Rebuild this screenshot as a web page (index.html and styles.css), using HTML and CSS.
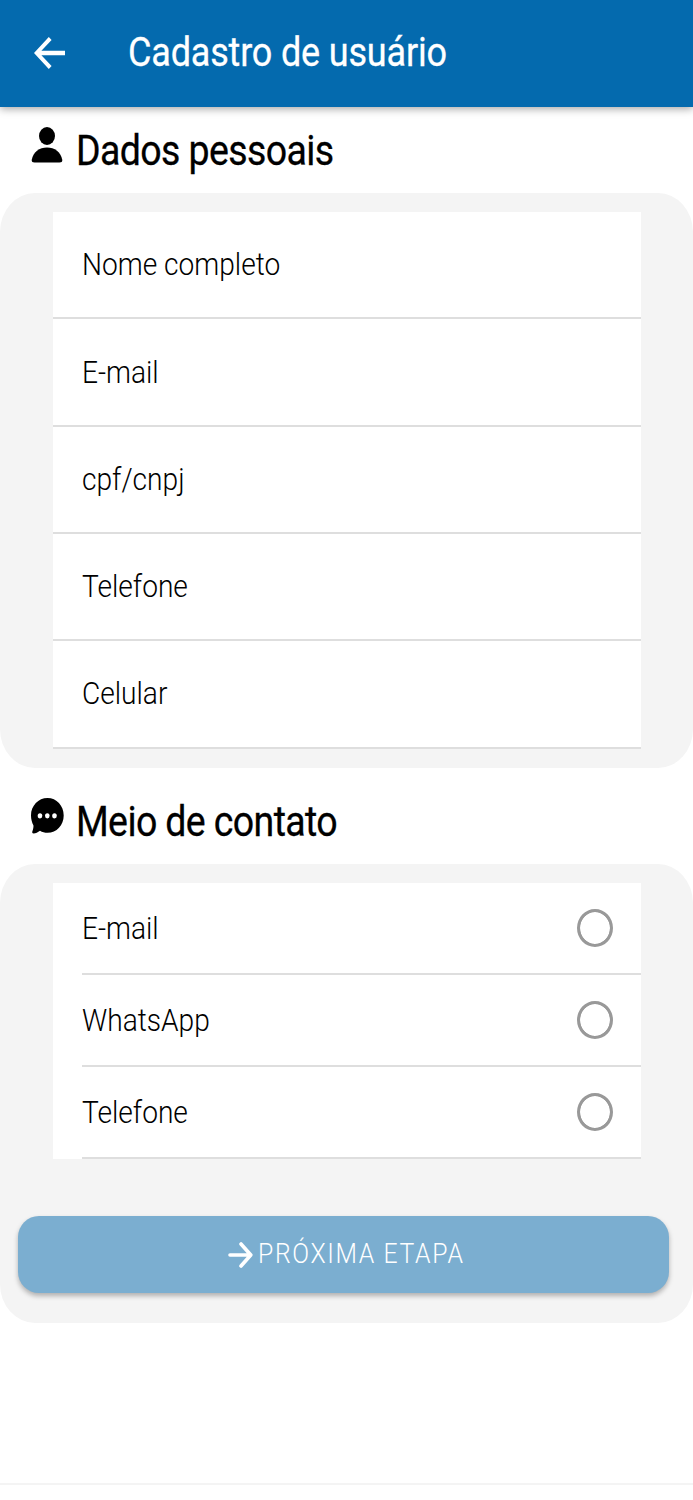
FILE: index.html
```
<!DOCTYPE html>
<html lang="pt-BR">
<head>
<meta charset="utf-8">
<title>Cadastro de usuário</title>
<link rel="stylesheet" href="styles.css">
</head>
<body>
<header class="toolbar">
  <svg class="back" viewBox="0 0 31 32" preserveAspectRatio="none"><path d="M31 13.800V18.200H7.400L17.600 29L14.800 32L0 16L14.800 0L17.600 3L7.400 13.800Z" fill="#fff"/></svg>
  <h1 class="title"><span class="narrow">Cadastro de usuário</span></h1>
</header>
<main class="content">
  <h2 class="heading">
    <svg class="person" viewBox="0 0 32 36"><ellipse cx="16" cy="9" rx="8" ry="9"/><path d="M3.500 35.500Q.5 35.500 .7 33C2 25 8.500 20.500 16 20.500S30 25 31.300 33Q31.500 35.500 28.500 35.500Z"/></svg>
    <span class="narrow">Dados pessoais</span>
  </h2>
  <section class="panel">
    <ul class="list fields">
      <li class="field"><span class="narrow">Nome completo</span></li>
      <li class="field"><span class="narrow">E-mail</span></li>
      <li class="field"><span class="narrow">cpf/cnpj</span></li>
      <li class="field"><span class="narrow">Telefone</span></li>
      <li class="field"><span class="narrow">Celular</span></li>
    </ul>
  </section>
  <h2 class="heading">
    <svg class="chat" viewBox="0 0 33 36"><path d="M16.500 0C25.600 0 32.700 7.700 32.700 17.400S25.600 34.800 16.500 34.800C13.800 34.800 11.200 34 9 32.700C6.800 34.300 4.800 35.500 2.500 35.500Q.7 35.500 1.300 33.500C2.100 31.500 2.700 29 2.400 27.200C1 24.500 0 21.300 0 17.400C0 7.700 7.400 0 16.500 0Z"/><g fill="#fff"><ellipse cx="9" cy="17.800" rx="2.300" ry="2.600"/><ellipse cx="16.300" cy="17.800" rx="2.300" ry="2.600"/><ellipse cx="23.500" cy="17.800" rx="2.300" ry="2.600"/></g></svg>
    <span class="narrow">Meio de contato</span>
  </h2>
  <section class="panel choices">
    <ul class="list">
      <li class="option"><span class="narrow">E-mail</span><i class="radio"></i></li>
      <li class="option"><span class="narrow">WhatsApp</span><i class="radio"></i></li>
      <li class="option"><span class="narrow">Telefone</span><i class="radio"></i></li>
    </ul>
    <button class="next">
      <svg class="arrow" viewBox="0 0 25 26"><path d="M2 13H22M13 2L22.800 13L13 24" fill="none" stroke="#fff" stroke-width="3.600" stroke-linecap="round" stroke-linejoin="round"/></svg>
      <span class="narrow">PRÓXIMA ETAPA</span>
    </button>
  </section>
</main>
<footer class="footer"></footer>
</body>
</html>
```
FILE: styles.css
```
* { box-sizing: border-box; }
body {
  margin: 0;
  height: 1500px;
  display: flex;
  flex-direction: column;
  background: #fff;
  color: #000;
  font-family: Roboto, "Liberation Sans", sans-serif;
  overflow: hidden;
}
svg { display: block; flex: none; }
h1, h2, ul { margin: 0; padding: 0; font-weight: 400; list-style: none; }
.narrow {
  display: inline-block;
  white-space: nowrap;
  transform: scaleX(.88);
  transform-origin: left center;
}
.toolbar {
  height: 107px;
  flex: none;
  display: flex;
  align-items: center;
  padding-left: 34px;
  background: #046aae;
  box-shadow: 0 2px 8px rgba(0, 0, 0, .35);
}
.back { width: 31px; height: 32px; margin-top: -1px; }
.title {
  margin: -4px 0 0 63px;
  color: #fff;
  font-size: 41px;
  font-weight: 400;
  line-height: 50px;
  letter-spacing: -.2px;
  -webkit-text-stroke: .3px #fff;
}
.title .narrow { transform: scaleX(.878); }
.content { flex: 1; }
.heading {
  height: 86px;
  display: flex;
  align-items: flex-start;
  padding: 20px 0 0 31px;
  font-size: 42px;
  line-height: 48px;
  letter-spacing: -.7px;
  -webkit-text-stroke: .3px #000;
}
.heading .narrow { transform: scaleX(.893); }
.person { width: 32px; height: 36px; margin-right: 12.500px; }
.chat { width: 33px; height: 36px; margin-right: 11.500px; }
.panel {
  height: 575px;
  padding-top: 18.500px;
  border-radius: 35px / 39px;
  background: #f4f4f4;
}
.panel + .heading { height: 96px; padding-top: 30px; }
.choices { height: 459px; padding-top: 19px; }
.list {
  margin: 0 52px 0 53px;
  background: #fff;
  font-size: 31px;
  font-weight: 300;
}
.list .narrow { transform: scaleX(.907); }
.fields { padding-top: .6px; }
.field {
  height: 107.300px;
  display: flex;
  align-items: center;
  padding-left: 28.500px;
  border-bottom: 2px solid #dedede;
}
.option {
  height: 92px;
  margin-left: 28.500px;
  padding-right: 28px;
  display: flex;
  align-items: center;
  justify-content: space-between;
  border-bottom: 2px solid #dedede;
}
.radio {
  width: 36px;
  height: 38px;
  border: 3px solid #999;
  outline: .5px solid #999;
  outline-offset: -3.500px;
  border-radius: 50%;
}
.next {
  width: 651px;
  height: 77px;
  margin: 57px 0 0 18px;
  padding: 0 0 2px 210px;
  display: flex;
  align-items: center;
  gap: 4.500px;
  border: 0;
  border-radius: 21px;
  background: #7baed0;
  color: #fff;
  font: 300 27px Roboto, "Liberation Sans", sans-serif;
  letter-spacing: 1.800px;
  box-shadow: 0 3px 5px rgba(0, 0, 0, .28);
}
.next .narrow { transform: scaleX(.917); }
.arrow { width: 25px; height: 26px; margin-top: 2px; }
.footer {
  height: 17px;
  border-top: 2px solid #f4f4f4;
}
```
